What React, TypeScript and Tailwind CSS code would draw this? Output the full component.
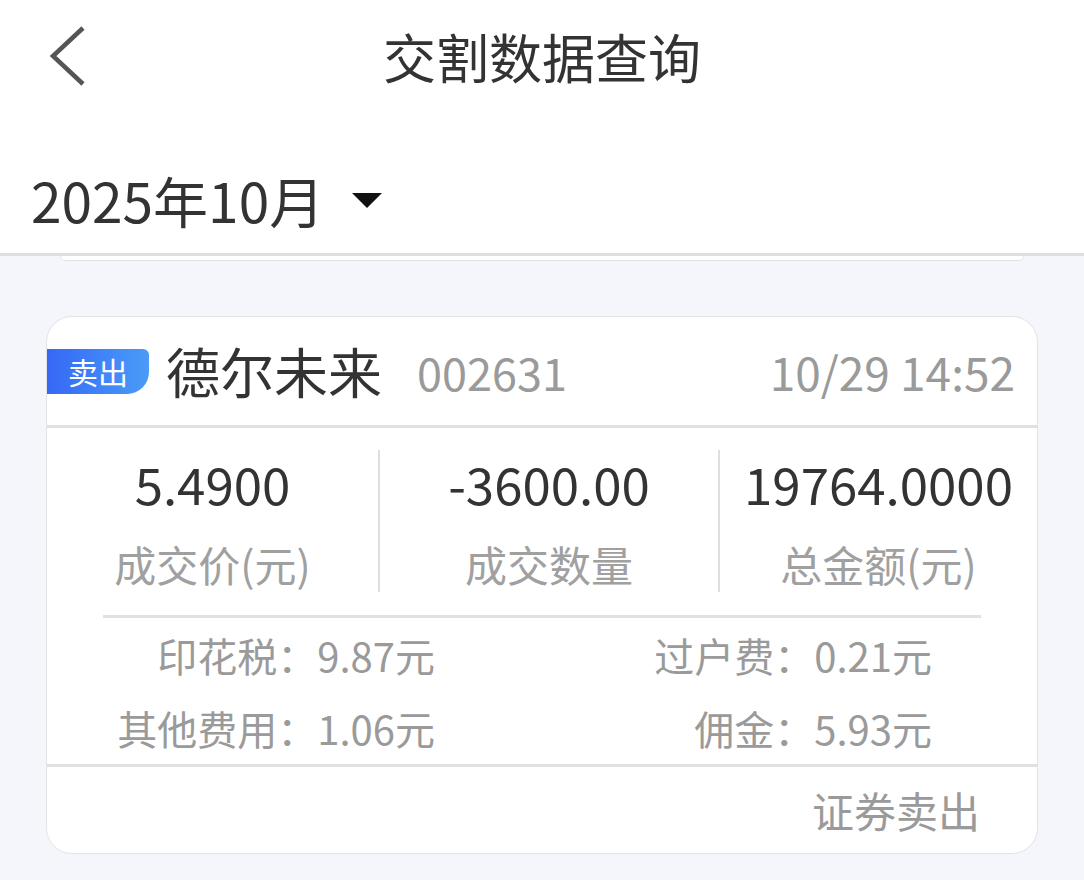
const font = { fontFamily: '"Noto Sans CJK SC", "Noto Sans", sans-serif' };

const BackIcon = () => (
  <svg width="40" height="64" viewBox="0 0 40 64" fill="none">
    <path d="M34 4 L4 32 L34 60" stroke="#555" strokeWidth="4.5" />
  </svg>
);

const Caret = () => (
  <svg width="30" height="15" viewBox="0 0 30 15">
    <polygon points="0,0 30,0 15,15" fill="#111" />
  </svg>
);

const stats = [
  { value: "5.4900", label: "成交价(元)" },
  { value: "-3600.00", label: "成交数量" },
  { value: "19764.0000", label: "总金额(元)" },
];

const fees = [
  ["印花税：9.87元", "过户费：0.21元"],
  ["其他费用：1.06元", "佣金：5.93元"],
];

export default function App() {
  return (
    <div className="min-h-screen flex flex-col bg-[#f5f6fc]" style={font}>
      <div className="bg-white border-b-[3px] border-[#dedede]">
        <div className="h-[112px] grid grid-cols-[1fr_auto_1fr] items-center">
          <div className="pl-[49px]">
            <BackIcon />
          </div>
          <h1 className="text-[53px] leading-none text-[#333]">交割数据查询</h1>
          <div />
        </div>
        <div className="h-[141px] flex items-center pl-[31px] pt-[34px]">
          <span className="text-[55px] leading-none text-[#333]">2025年10月</span>
          <span className="ml-[28px] mt-[2px]">
            <Caret />
          </span>
        </div>
      </div>

      <div className="mx-[60px] h-[5px] bg-white rounded-b-[10px] border-x border-b border-[#e3e3e3]" />

      <div className="mt-[55px] ml-[46px] w-[992px] bg-white rounded-[26px] border border-[#e3e3e3] overflow-hidden">
        <div className="h-[108px] flex items-center">
          <span className="h-[45px] w-[102px] flex items-center justify-center bg-gradient-to-r from-[#3767f5] to-[#4b9bf8] rounded-tr-[6px] rounded-br-[22px] text-white text-[30px] leading-none">
            卖出
          </span>
          <span className="ml-[17px] text-[54px] leading-none text-[#333]">德尔未来</span>
          <span className="ml-[35px] text-[45px] leading-none text-[#9a9a9a]">002631</span>
          <span className="ml-auto mr-[22px] text-[46px] leading-none text-[#9a9a9a]">10/29 14:52</span>
        </div>
        <div className="h-[3px] bg-[#e2e0e0]" />

        <div className="h-[187px] pt-[22px] grid grid-cols-[331px_340px_1fr]">
          {stats.map((s, i) => (
            <div
              key={s.label}
              className={`h-[142px] flex flex-col items-center ${i > 0 ? "border-l-2 border-[#e0dede]" : ""}`}
            >
              <span className="mt-[8px] text-[51px] leading-[50px] text-[#333]">{s.value}</span>
              <span className="mt-[33px] text-[42px] leading-[46px] text-[#a0a0a0]">{s.label}</span>
            </div>
          ))}
        </div>
        <div className="mx-[56px] h-[3px] bg-[#e2e0e0]" />

        <div>
          {fees.map(([a, b]) => (
            <div key={a} className="h-[73px] flex items-center text-[40px] leading-none text-[#9a9a9a]">
              <span className="w-[388px] text-right">{a}</span>
              <span className="w-[497px] text-right">{b}</span>
            </div>
          ))}
        </div>
        <div className="h-[3px] bg-[#e2e0e0]" />

        <div className="h-[86px] flex items-center justify-end pr-[57px]">
          <span className="text-[42px] leading-none text-[#9a9a9a]">证券卖出</span>
        </div>
      </div>
    </div>
  );
}
